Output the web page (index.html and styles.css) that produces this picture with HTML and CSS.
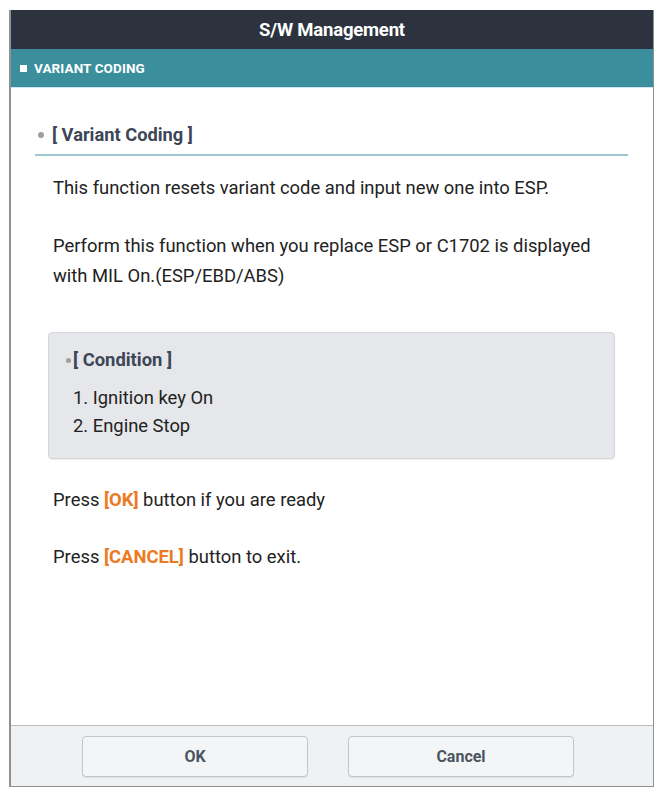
FILE: index.html
```html
<!DOCTYPE html>
<html>
<head>
    <title>S/W Management</title>
    <link rel="stylesheet" href="styles.css">
</head>
<body>
    <div class="dialog">
        <div class="dialog-title">S/W Management</div>
        <div class="section-bar"><span class="square"></span>VARIANT CODING</div>

        <div class="dialog-body">
            <h2 class="heading"><span class="dot"></span>[ Variant Coding ]</h2>

            <p class="text first">This function resets variant code and input new one into ESP.</p>
            <p class="text">Perform this function when you replace ESP or C1702 is displayed<br>with MIL On.(ESP/EBD/ABS)</p>

            <div class="condition">
                <div class="condition-title"><span class="dot small"></span>[ Condition ]</div>
                <ol class="condition-list">
                    <li>1. Ignition key On</li>
                    <li>2. Engine Stop</li>
                </ol>
            </div>

            <p class="text press">Press <span class="key">[OK]</span> button if you are ready</p>
            <p class="text press2">Press <span class="key">[CANCEL]</span> button to exit.</p>
        </div>

        <div class="dialog-footer">
            <button class="btn">OK</button>
            <button class="btn">Cancel</button>
        </div>
    </div>
</body>
</html>
```

FILE: styles.css
```css
body { margin: 0; background: #fff; font-family: Roboto, "Liberation Sans", Arial, sans-serif; }

.dialog { margin: 10px 0 0 9px; width: 642px; border: 1px solid #8f9295; border-left-width: 2px; border-top: none; background: #fff; }

.dialog-title { height: 39px; line-height: 40px; background: #2c333e; color: #fff; text-align: center; font-size: 18.5px; font-weight: 700; letter-spacing: -0.2px; }

.section-bar { display: flex; align-items: center; height: 38px; padding-left: 9px; background: #3b8e9c; color: #fff; font-size: 13.5px; font-weight: 700; letter-spacing: 0.1px; border-bottom: 1px solid #cfe6ea; }
.section-bar .square { width: 7px; height: 7px; background: #fff; margin-right: 7px; }

.dialog-body { height: 637px; box-sizing: border-box; padding: 36px 25px 0 24px; }

.heading { display: flex; align-items: center; margin: 0; padding: 0 0 8px 3px; font-size: 18.3px; line-height: 22px; font-weight: 700; color: #3c4656; border-bottom: 2px solid #9dc7cf; }
.dot { display: inline-block; width: 6px; height: 6px; border-radius: 50%; background: #9aa0a8; margin-right: 8px; }
.dot.small { width: 5px; height: 5px; margin-right: 2px; }

.text { margin: 0; padding-left: 18px; font-size: 18.4px; line-height: 30px; color: #222; }
.text.first { margin-top: 17px; }
.text + .text { margin-top: 28px; }

.condition { margin: 41px 13px 0 13px; height: 127px; box-sizing: border-box; background: #e6e7ea; border: 1px solid #d3d5d8; border-radius: 4px; box-shadow: 0 1px 1px rgba(0,0,0,0.06); }
.condition-title { display: flex; align-items: center; margin: 16px 0 0 17px; font-size: 18.4px; line-height: 22px; font-weight: 700; color: #3c4656; }
.condition-list { list-style: none; margin: 13px 0 0 0; padding-left: 24px; font-size: 18.4px; line-height: 28px; color: #222; }

.text.press { margin-top: 26px; }
.text.press2 { margin-top: 27px; }
.key { color: #ec7a22; font-weight: 700; }

.dialog-footer { display: flex; justify-content: center; gap: 40px; height: 61px; padding: 10px 8px 0 0; box-sizing: border-box; background: #f0f1f3; border-top: 1px solid #b9bcbf; }
.btn { width: 226px; height: 41px; background: #f4f5f6; border: 1px solid #c2c5c9; border-radius: 4px; box-shadow: 0 1px 1px rgba(0,0,0,0.08); font-family: inherit; font-size: 16px; font-weight: 700; color: #4b5561; }
```
